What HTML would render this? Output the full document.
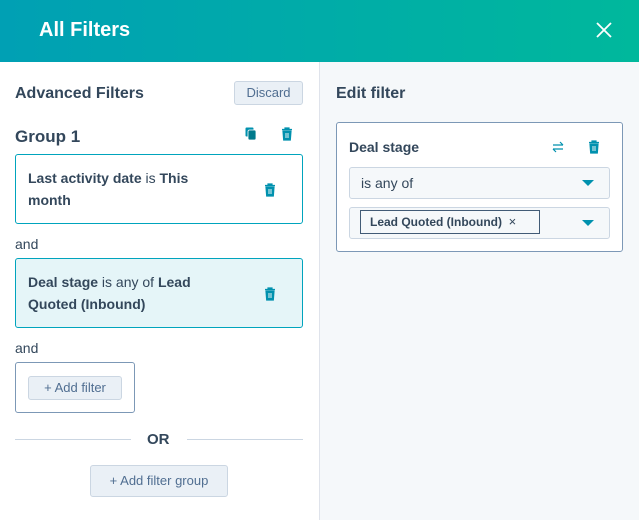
<!DOCTYPE html>
<html><head><style>
*{box-sizing:border-box;margin:0;padding:0}
body{width:639px;height:520px;overflow:hidden;font-family:"Liberation Sans",sans-serif;color:#33475b;background:#fff;position:relative}
.a{position:absolute}
.hdr{left:0;top:0;width:639px;height:62px;background:linear-gradient(90deg,#00a0b4,#00b89c)}
.b{font-weight:bold}
.box{border:1px solid #00a4bd;border-radius:3px}
.btn{background:#eaf0f6;border:1px solid #cbd6e2;border-radius:3px;color:#506e91;font-size:13px;text-align:center}
.sel{background:#f5f8fa;border:1px solid #cbd6e2;border-radius:3px}
.car{width:0;height:0;border-left:6px solid transparent;border-right:6px solid transparent;border-top:6px solid #0091ae}
</style></head><body>
<div class="a hdr"></div>
<div class="a b" style="left:39px;top:19px;color:#fff;font-size:20px">All Filters</div>
<svg class="a" style="left:596px;top:22px" width="16" height="16"><path d="M1 1L15 15M15 1L1 15" stroke="#fff" stroke-width="1.8"/></svg>

<div class="a" style="left:319px;top:62px;width:320px;height:458px;background:#f5f8fa;border-left:1px solid #dfe3eb"></div>

<div class="a b" style="left:15px;top:85px;font-size:16px">Advanced Filters</div>
<div class="a btn" style="left:234px;top:81px;width:69px;height:24px;line-height:22px">Discard</div>
<div class="a b" style="left:15px;top:127px;font-size:17px">Group 1</div>
<svg class="a" style="left:245px;top:127px" width="12" height="14"><rect x="0.5" y="0.5" width="8" height="9" rx="1" fill="#0091ae"/><rect x="3" y="3" width="8" height="10" rx="1.5" fill="#007a8c" stroke="#fff" stroke-width="0.8"/></svg>
<svg class="a" style="left:281px;top:127px" width="12" height="14" viewBox="0 0 12 14"><path d="M1 2.5h10M4 2.5V1h4v1.5M2 4h8l-.7 9H2.7z" fill="#0091ae" stroke="#0091ae" stroke-width="1.2"/><path d="M5 6v5M7 6v5" stroke="#fff" stroke-width=".9"/></svg>

<div class="a box" style="left:15px;top:154px;width:288px;height:70px"></div>
<div class="a" style="left:28px;top:167px;width:200px;font-size:14px;line-height:22px"><span class="b">Last activity date</span> is <span class="b">This month</span></div>
<svg class="a" style="left:264px;top:183px" width="12" height="14" viewBox="0 0 12 14"><path d="M1 2.5h10M4 2.5V1h4v1.5M2 4h8l-.7 9H2.7z" fill="#0091ae" stroke="#0091ae" stroke-width="1.2"/><path d="M5 6v5M7 6v5" stroke="#fff" stroke-width=".9"/></svg>

<div class="a" style="left:15px;top:236px;font-size:14px">and</div>

<div class="a box" style="left:15px;top:258px;width:288px;height:70px;background:#e5f5f8"></div>
<div class="a" style="left:28px;top:271px;width:200px;font-size:14px;line-height:22px"><span class="b">Deal stage</span> is any of <span class="b">Lead Quoted (Inbound)</span></div>
<svg class="a" style="left:264px;top:287px" width="12" height="14" viewBox="0 0 12 14"><path d="M1 2.5h10M4 2.5V1h4v1.5M2 4h8l-.7 9H2.7z" fill="#0091ae" stroke="#0091ae" stroke-width="1.2"/><path d="M5 6v5M7 6v5" stroke="#fff" stroke-width=".9"/></svg>

<div class="a" style="left:15px;top:340px;font-size:14px">and</div>
<div class="a" style="left:15px;top:362px;width:120px;height:51px;border:1px solid #7c98b6;border-radius:3px"></div>
<div class="a btn" style="left:28px;top:376px;width:94px;height:24px;line-height:22px">+ Add filter</div>

<div class="a" style="left:15px;top:439px;width:116px;height:1px;background:#cbd6e2"></div>
<div class="a b" style="left:147px;top:431px;font-size:15px">OR</div>
<div class="a" style="left:187px;top:439px;width:116px;height:1px;background:#cbd6e2"></div>
<div class="a btn" style="left:90px;top:465px;width:138px;height:32px;line-height:30px">+ Add filter group</div>

<div class="a b" style="left:336px;top:85px;font-size:16px">Edit filter</div>
<div class="a" style="left:336px;top:122px;width:287px;height:130px;background:#fff;border:1px solid #7c98b6;border-radius:3px"></div>
<div class="a b" style="left:349px;top:139px;font-size:14px">Deal stage</div>
<svg class="a" style="left:552px;top:141px" width="12" height="12" viewBox="0 0 12 12"><path d="M1 4h10M8 1l3 3M11 8H1M4 11L1 8" stroke="#0091ae" stroke-width="1.2" fill="none"/></svg>
<svg class="a" style="left:588px;top:140px" width="12" height="14" viewBox="0 0 12 14"><path d="M1 2.5h10M4 2.5V1h4v1.5M2 4h8l-.7 9H2.7z" fill="#0091ae" stroke="#0091ae" stroke-width="1.2"/><path d="M5 6v5M7 6v5" stroke="#fff" stroke-width=".9"/></svg>
<div class="a sel" style="left:349px;top:167px;width:261px;height:32px"></div>
<div class="a" style="left:361px;top:175px;font-size:14px;color:#33475b">is any of</div>
<div class="a car" style="left:582px;top:180px"></div>
<div class="a sel" style="left:349px;top:207px;width:261px;height:32px"></div>
<div class="a" style="left:360px;top:210px;width:180px;height:24px;border:1px solid #425b76;background:#f5f8fa;font-size:12px;line-height:22px;padding-left:9px"><span class="b">Lead Quoted (Inbound)</span>&nbsp;&nbsp;<span style="font-size:13px">×</span></div>
<div class="a car" style="left:582px;top:220px"></div>
</body></html>
